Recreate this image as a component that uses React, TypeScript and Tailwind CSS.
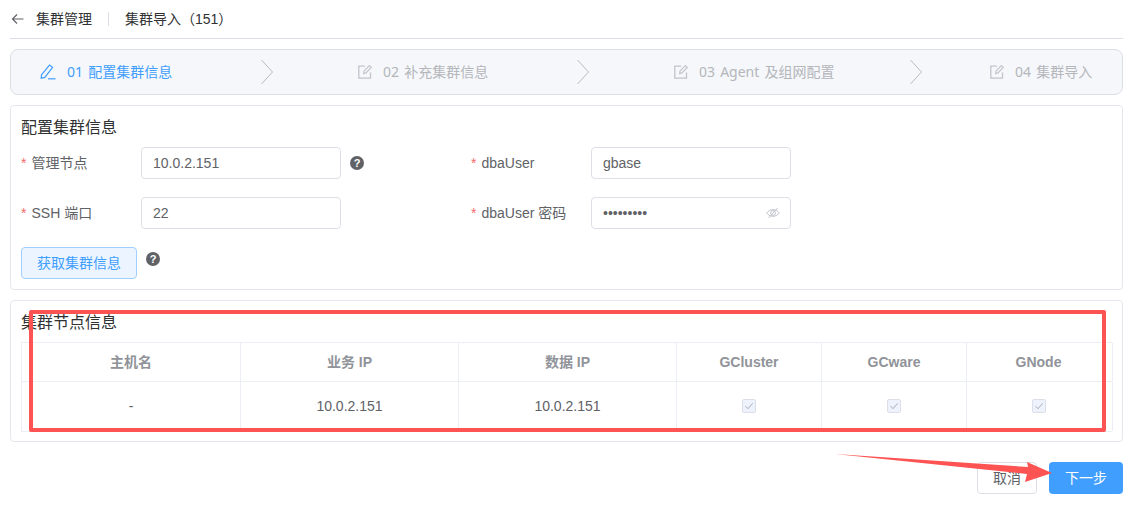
import React from "react";

const font = { fontFamily: '"Liberation Sans", "Noto Sans CJK SC", sans-serif' };
const navFont = { fontFamily: '"Noto Sans", "Noto Sans CJK SC", sans-serif' };

function EditIcon() {
  return (
    <svg width="16" height="16" viewBox="0 0 16 16" fill="none" stroke="#c0c4cc" strokeWidth="1.3" className="mr-[10px] shrink-0">
      <path d="M13.5 8.5V14.2H1.8V2.2H8" />
      <path d="M6.6 9.6L7 7L12.4 1.6L14.3 3.5L8.9 8.9L6.6 9.6Z" strokeWidth="1.1" />
    </svg>
  );
}

function Chevron() {
  return (
    <svg width="14" height="26" viewBox="0 0 14 26" fill="none" stroke="#b9bcc3" strokeWidth="1" className="shrink-0">
      <path d="M1.5 1L12.5 13L1.5 25" />
    </svg>
  );
}

function Help({ className }: { className: string }) {
  return (
    <span className={`flex h-[14px] w-[14px] shrink-0 items-center justify-center rounded-full bg-[#606266] text-[11px] font-bold leading-none text-white ${className}`}>
      ?
    </span>
  );
}

function Field({ label, value, children }: { label: string; value: string; children?: React.ReactNode }) {
  return (
    <div className="flex h-[32px] items-center">
      <label className="w-[120px] shrink-0 text-[14px] text-[#606266]">
        <span className="mr-[5px] text-[#f56c6c]">*</span>
        {label}
      </label>
      <div className="relative flex h-[32px] w-[200px] items-center rounded-[4px] border border-[#dcdfe6] bg-white pl-[11px] text-[14px] text-[#606266]">
        {value}
        {children}
      </div>
    </div>
  );
}

function Check() {
  return (
    <span className="mb-[1px] inline-flex h-[14px] w-[14px] items-center justify-center rounded-[2px] border border-[#dcdfe6] bg-[#edf2fc]">
      <svg width="10" height="10" viewBox="0 0 10 10" fill="none" stroke="#a8abb2" strokeWidth="1">
        <path d="M1.5 5.2L4 7.7L8.6 2.4" />
      </svg>
    </span>
  );
}

const th = "flex items-center justify-center border-r border-[#ebeef5] text-center text-[14px] font-bold text-[#909399]";
const td = "flex items-center justify-center border-r border-[#ebeef5] text-center text-[14px] text-[#606266]";

export default function App() {
  return (
    <div className="relative h-[518px] w-[1133px] overflow-hidden bg-white px-[10px]" style={font}>
      <header className="flex h-[39px] items-center border-b border-[#dcdfe6] text-[14px] text-[#303133]">
        <svg width="14" height="12" viewBox="0 0 14 12" fill="none" stroke="#606266" strokeWidth="1.2" className="ml-[1px] mr-[11px]">
          <path d="M12.5 6H1.5M6 1.5L1.5 6L6 10.5" />
        </svg>
        <span>集群管理</span>
        <span className="mx-[16px] h-[14px] w-px bg-[#dcdfe6]" />
        <span>集群导入（151）</span>
      </header>

      <nav className="mt-[10px] flex h-[46px] items-center rounded-[8px] border border-[#dcdfe6] bg-[#f5f7fa] pl-[29px] text-[14px] text-[#b4b6bb] [word-spacing:1.5px]" style={navFont}>
        <svg width="16" height="18" viewBox="0 0 16 18" fill="none" stroke="#409eff" strokeWidth="1.2" className="mr-[11px] shrink-0">
          <path d="M1.5 11.8L9.5 2L12.6 4.4L4.8 14.4L1.2 15.2L1.5 11.8Z" />
          <path d="M8 15.8H15.5" />
        </svg>
        <span className="mb-[2px] w-[193px] text-[#409eff]">01 配置集群信息</span>
        <Chevron />
        <span className="ml-[83px] flex w-[219px] items-center"><EditIcon /><span className="mb-[2px]">02 补充集群信息</span></span>
        <Chevron />
        <span className="ml-[83px] flex w-[236px] items-center"><EditIcon /><span className="mb-[2px]">03 Agent 及组网配置</span></span>
        <Chevron />
        <span className="ml-[66px] flex items-center"><EditIcon /><span className="mb-[2px]">04 集群导入</span></span>
      </nav>

      <section className="mt-[10px] h-[185px] rounded-[4px] border border-[#e4e7ed] px-[10px] pt-[13px]">
        <h2 className="h-[18px] text-[16px] leading-[18px] text-[#303133]">配置集群信息</h2>
        <div className="mt-[10px] flex flex-col gap-[18px]">
          <div className="flex">
            <div className="flex w-[450px] items-center">
              <Field label="管理节点" value="10.0.2.151" />
              <Help className="ml-[9px]" />
            </div>
            <Field label="dbaUser" value="gbase" />
          </div>
          <div className="flex">
            <div className="flex w-[450px] items-center">
              <Field label="SSH 端口" value="22" />
            </div>
            <Field label="dbaUser 密码" value="•••••••••">
              <svg width="14" height="14" viewBox="0 0 14 14" fill="none" stroke="#c0c4cc" strokeWidth="1" className="absolute right-[10px] top-[8px]">
                <path d="M0.7 7C3.6 2.6 10.4 2.6 13.3 7C10.4 11.4 3.6 11.4 0.7 7Z" />
                <circle cx="7" cy="7" r="2.4" />
                <path d="M2.5 12L11.5 2" />
              </svg>
            </Field>
          </div>
          <div className="flex items-start">
            <button className="h-[32px] w-[116px] rounded-[4px] border border-[#a0cfff] bg-[#ecf5ff] text-[14px] text-[#409eff]">
              获取集群信息
            </button>
            <Help className="ml-[9px] mt-[5px]" />
          </div>
        </div>
      </section>

      <section className="mt-[10px] h-[142px] rounded-[4px] border border-[#e4e7ed] px-[10px] pt-[13px]">
        <h2 className="h-[18px] text-[16px] leading-[18px] text-[#303133]">集群节点信息</h2>
        <div className="mt-[10px] h-[90px] border-b border-l border-t border-[#ebeef5]">
          <div className="grid h-[39px] grid-cols-[219px_218px_218px_145px_145px_146px] border-b border-[#ebeef5]">
            {["主机名", "业务 IP", "数据 IP", "GCluster", "GCware"].map((h) => (
              <div key={h} className={th}>{h}</div>
            ))}
            <div className={`${th} pr-[2px]`}>GNode</div>
          </div>
          <div className="grid h-[49px] grid-cols-[219px_218px_218px_145px_145px_146px]">
            {["-", "10.0.2.151", "10.0.2.151"].map((v, i) => (
              <div key={i} className={td}>{v}</div>
            ))}
            <div className={td}><Check /></div>
            <div className={td}><Check /></div>
            <div className={`${td} pr-[2px]`}><Check /></div>
          </div>
        </div>
      </section>

      <footer className="mt-[20px] flex justify-end gap-[12px]">
        <button className="h-[32px] w-[60px] rounded-[4px] border border-[#dcdfe6] bg-white text-[14px] text-[#606266]">取消</button>
        <button className="h-[32px] w-[74px] rounded-[4px] bg-[#409eff] text-[14px] text-white">下一步</button>
      </footer>

      {/* red annotation */}
      <div className="absolute left-[29px] top-[310px] h-[122px] w-[1077px] rounded-[2px] border-[4px] border-[#fd5353]" />
      <svg width="240" height="60" viewBox="0 0 240 60" className="absolute left-[830px] top-[448px]">
        <path d="M5 6L198 19L197 14L222 25L195 34L197 26Z" fill="#fd5353" />
      </svg>
    </div>
  );
}
